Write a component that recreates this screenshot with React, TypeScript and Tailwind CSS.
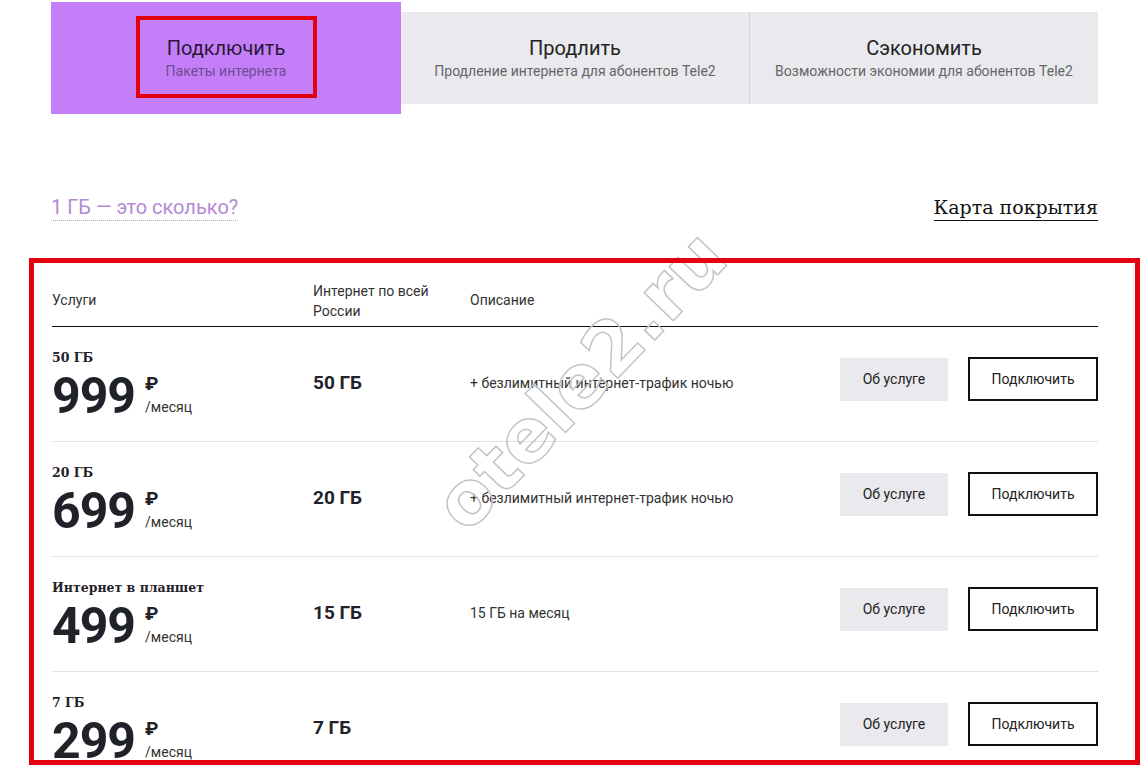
import React from "react";

type Plan = {
  label: string;
  price: string;
  volume: string;
  description: string;
};

const plans: Plan[] = [
  { label: "50 ГБ", price: "999", volume: "50 ГБ", description: "+ безлимитный интернет-трафик ночью" },
  { label: "20 ГБ", price: "699", volume: "20 ГБ", description: "+ безлимитный интернет-трафик ночью" },
  { label: "Интернет в планшет", price: "499", volume: "15 ГБ", description: "15 ГБ на месяц" },
  { label: "7 ГБ", price: "299", volume: "7 ГБ", description: "" },
];

const sans = "font-['Roboto','Liberation_Sans',sans-serif]";
const serif = "font-['DejaVu_Serif','Liberation_Serif',serif]";

function PlanRow({ plan }: { plan: Plan }) {
  return (
    <div className="flex items-center h-[115px] border-b border-[#e2e2e2]">
      {/* Service + price */}
      <div className="w-[261px] flex flex-col">
        <span className={`${serif} text-[12.5px] font-bold text-[#1f2229] leading-[16px]`}>
          {plan.label}
        </span>
        <div className="flex items-start mt-[8px]">
          <span className="text-[50px] font-bold leading-[44px] tracking-[-1px] text-[#1f2229]">
            {plan.price}
          </span>
          <div className="flex flex-col ml-[10px]">
            <span className="text-[19px] font-bold leading-[20px] text-[#1f2229]">₽</span>
            <span className="text-[14px] leading-[16px] text-[#333] mt-[5px]">/месяц</span>
          </div>
        </div>
      </div>
      {/* Volume */}
      <div className="w-[157px] text-[19px] font-bold text-[#1f2229] pb-[2px]">{plan.volume}</div>
      {/* Description */}
      <div className="flex-1 text-[14px] text-[#333] pb-[2px]">{plan.description}</div>
      {/* Actions */}
      <div className="flex items-center gap-[20px] pb-[10px]">
        <button className="w-[108px] h-[43px] bg-[#e9e9ee] text-[14px] text-[#222]">Об услуге</button>
        <button className="w-[130px] h-[44px] border-2 border-[#111] text-[14px] text-[#222]">
          Подключить
        </button>
      </div>
    </div>
  );
}

export default function App() {
  return (
    <div className={`${sans} relative w-[1145px] h-[766px] overflow-hidden bg-white`}>
      {/* Tabs */}
      <div className="flex items-center ml-[51px] mt-[2px] w-[1047px]">
        <div className="w-[350px] h-[112px] bg-[#c47ef8] flex flex-col items-center justify-center">
          <span className="text-[20px] leading-[26px] text-[#2b1838]">Подключить</span>
          <span className="text-[14px] leading-[20px] text-[#6e4a92]">Пакеты интернета</span>
        </div>
        <div className="flex-1 h-[92px] bg-[#e9e9ee] flex">
          <div className="flex-1 flex flex-col items-center justify-center border-r border-[#d4d4d8]">
            <span className="text-[20px] leading-[26px] text-[#222]">Продлить</span>
            <span className="text-[14px] leading-[20px] text-[#666]">
              Продление интернета для абонентов Tele2
            </span>
          </div>
          <div className="flex-1 flex flex-col items-center justify-center">
            <span className="text-[20px] leading-[26px] text-[#222]">Сэкономить</span>
            <span className="text-[14px] leading-[20px] text-[#666]">
              Возможности экономии для абонентов Tele2
            </span>
          </div>
        </div>
      </div>

      {/* Links */}
      <div className="flex items-center justify-between ml-[51px] w-[1047px] mt-[80px]">
        <span className="text-[20px] leading-[26px] text-[#b38ad6] border-b border-dotted border-[#b5a5c4]">
          1 ГБ — это сколько?
        </span>
        <span className={`${serif} text-[19px] leading-[26px] text-[#111] border-b border-[#111]`}>
          Карта покрытия
        </span>
      </div>

      {/* Table */}
      <div className="ml-[52px] w-[1046px] mt-[42px]">
        <div className="flex items-center h-[64px] pt-[12px] border-b border-[#111] text-[14px] text-[#333]">
          <div className="w-[261px]">Услуги</div>
          <div className="w-[157px] leading-[20px]">
            Интернет по всей
            <br />
            России
          </div>
          <div className="flex-1">Описание</div>
        </div>
        {plans.map((p) => (
          <PlanRow key={p.price} plan={p} />
        ))}
      </div>

      {/* Watermark */}
      <div className="absolute left-[580px] top-[380px] -translate-x-1/2 -translate-y-1/2 -rotate-[46deg] font-['DejaVu_Sans',sans-serif] font-bold text-[74px] leading-none text-transparent [-webkit-text-stroke:1.5px_#c4c4c4] pointer-events-none select-none">
        otele2.ru
      </div>

      {/* Red annotation frames */}
      <div className="absolute left-[136px] top-[16px] w-[181px] h-[82px] border-[4px] border-[#e3000f] pointer-events-none" />
      <div className="absolute left-[29px] top-[258px] w-[1111px] h-[507px] border-[5px] border-[#e3000f] pointer-events-none" />
    </div>
  );
}
